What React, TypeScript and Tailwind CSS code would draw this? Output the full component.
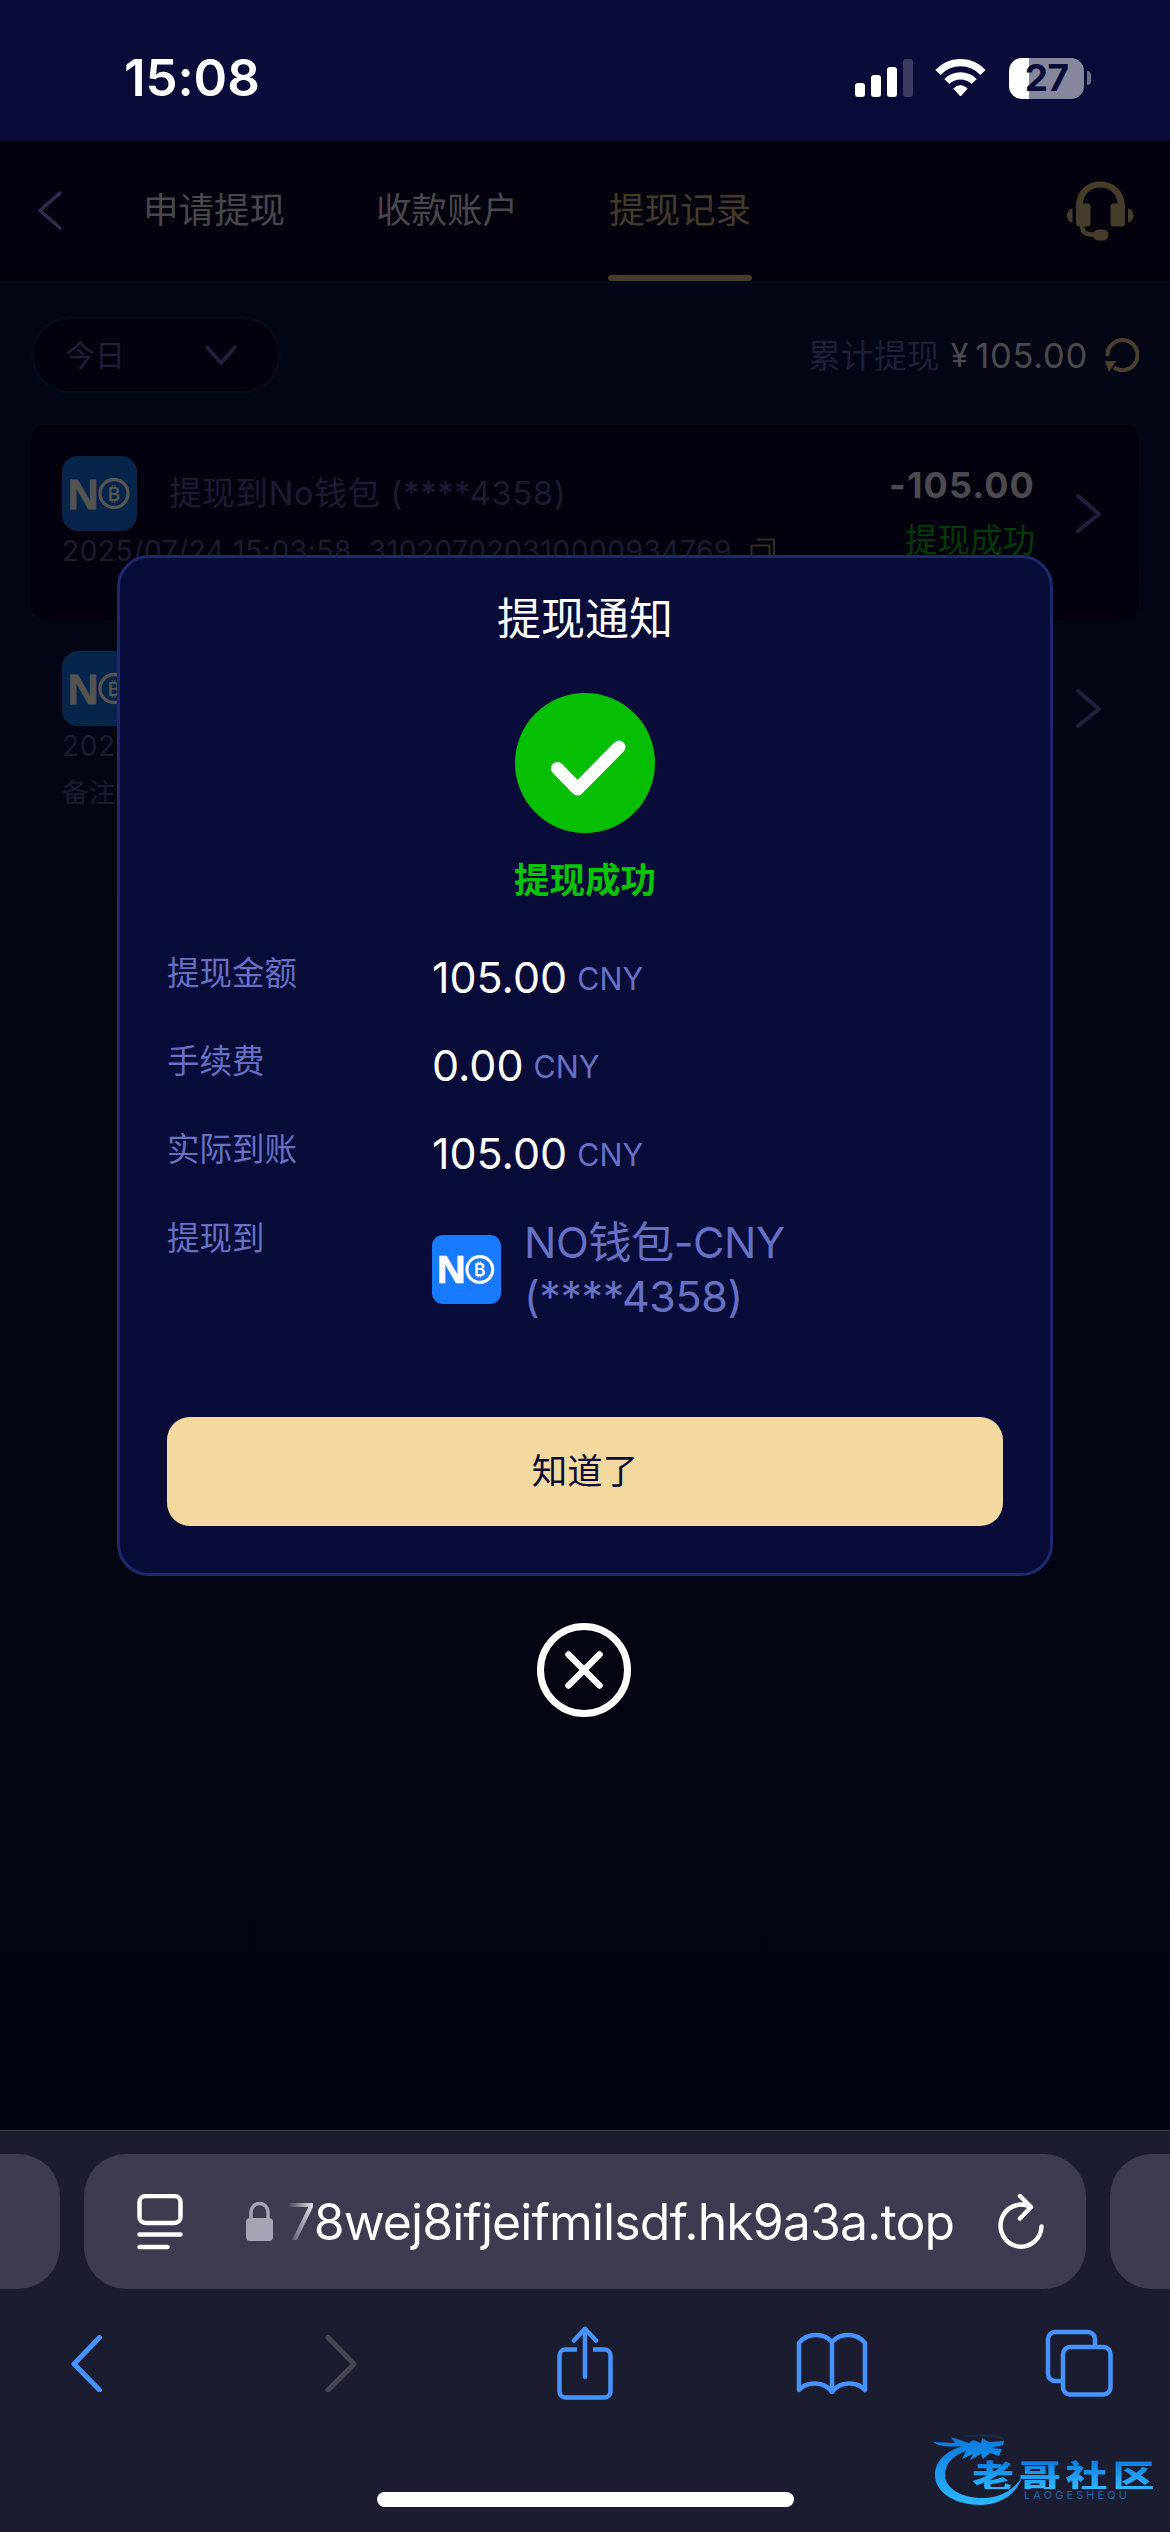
import type { ReactNode } from "react";

const tabs = ["申请提现", "收款账户", "提现记录"];

const amounts = [
  { label: "提现金额", value: "105.00" },
  { label: "手续费", value: "0.00" },
  { label: "实际到账", value: "105.00" }
];

export default function App() {
  return (
    <div className="flex h-[2532px] w-[1170px] flex-col overflow-hidden bg-[#020412] font-['Inter','Noto_Sans_CJK_SC',sans-serif]">
      <StatusBar />
      <main className="relative flex h-[1989px] flex-col bg-[linear-gradient(180deg,#030614_0%,#030513_50%,#020411_100%)]">
        <Header />
        <FilterBar />
        <section className="mt-[31px] px-[31px]">
          <RecordRow highlighted>
            <div className="flex w-[140px] shrink-0 flex-col items-end pt-[42px]">
              <p className="whitespace-nowrap text-[36px] font-bold leading-[36px] tracking-[1.1px] text-[#4b4b4d]">-105.00</p>
              <p className="mt-[20px] whitespace-nowrap text-[32.500px] leading-[36px] text-[#013b05]">提现成功</p>
            </div>
          </RecordRow>
          <RecordRow remark="备注" />
        </section>
        <WithdrawDialog />
      </main>
      <BrowserBar />
    </div>
  );
}

function StatusBar() {
  return (
    <div className="flex h-[141px] shrink-0 items-start justify-between bg-[#090b38] pl-[124px] pr-[79px] pt-[52px] text-white">
      <span className="text-[51px] font-semibold leading-[52px] tracking-[-0.1px]">15:08</span>
      <div className="flex h-[52px] items-center">
        <svg className="h-[38px] w-[59px]" viewBox="0 0 59 38">
          <rect x="0" y="24" width="10" height="14" rx="3" fill="#fff" />
          <rect x="16" y="16" width="10" height="22" rx="3" fill="#fff" />
          <rect x="32" y="8" width="10" height="30" rx="3" fill="#fff" />
          <rect x="48" y="0" width="10" height="38" rx="3" fill="#3b3c60" />
        </svg>
        <svg className="ml-[21px] h-[38px] w-[52px]" viewBox="0 0 52 38" fill="none" stroke="#fff" strokeWidth="7.2">
          <path d="M3 13.500A30.500 30.500 0 0 1 48 13.500" />
          <path d="M11.800 22.500A19.500 19.500 0 0 1 39.200 22.500" />
          <path d="M18.300 29.500Q25.500 22.500 32.700 29.500L26.500 36.500q-1 1-2 0z" fill="#fff" stroke="none" />
        </svg>
        <div className="ml-[22px] flex h-[41px] w-[75px] items-center justify-center rounded-[13px] bg-[linear-gradient(90deg,#fff_27%,#86869d_27%)]">
          <span className="text-[37px] font-bold leading-[40px] tracking-[-0.6px] text-[#090b38]">27</span>
        </div>
        <div className="ml-[3px] h-[14px] w-[4px] rounded-r-full bg-[#6c6d87]" />
      </div>
    </div>
  );
}

function Header() {
  return (
    <nav className="flex h-[143px] shrink-0 items-start border-b-[3px] border-[#050a1a] bg-[#03010e] pl-[37px] pr-[35px]">
      <svg className="mt-[50px] h-[39px] w-[26px]" viewBox="0 0 26 39" fill="none" stroke="#2a2d4b" strokeWidth="3.500" strokeLinecap="round" strokeLinejoin="round">
        <path d="M23 2L3 19.500L23 37" />
      </svg>
      <div className="ml-[79px] flex gap-[89px]">
        {tabs.map((tab) => (
          <div key={tab} className="flex h-[140px] w-[144px] flex-col items-center justify-between">
            <span
              className={
                tab === "提现记录"
                  ? "mt-[52px] whitespace-nowrap text-[35.500px] leading-[36px] text-[#443a29]"
                  : "mt-[52px] whitespace-nowrap text-[35.500px] leading-[36px] text-[#48484a]"
              }
            >
              {tab}
            </span>
            {tab === "提现记录" && <div className="h-[6px] w-full rounded-[3px] bg-[#453c2a]" />}
          </div>
        ))}
      </div>
      <svg className="ml-auto mt-[40px] h-[60px] w-[68px]" viewBox="0 0 68 60" fill="#453c2a">
        <path d="M9 26C9 10 20 .5 33.400 .5S58 10 58 26h-7C51 13 43 6.500 33.400 6.500S15.500 13 15.500 26z" />
        <rect x="9" y="22.500" width="14.500" height="23" rx="3" />
        <rect x="43.500" y="22.500" width="14.500" height="23" rx="3" />
        <path d="M5.500 27.500v14C2 41 0 38 0 34.500s2-6.500 5.500-7zM61 27.500v14c3.500-.5 5.500-3.500 5.500-7s-2-6.500-5.500-7z" />
        <path d="M15 44c0 6 3 9.500 9 9.500h6" fill="none" stroke="#453c2a" strokeWidth="4.500" />
        <rect x="26" y="48.500" width="15.500" height="11" rx="5.500" />
      </svg>
    </nav>
  );
}

function FilterBar() {
  return (
    <div className="mt-[32px] flex h-[78px] shrink-0 items-center justify-between px-[31px]">
      <div className="flex h-[78px] w-[250px] items-center justify-between rounded-full border-[3px] border-[#050a1a] bg-[#03010e] pl-[31px] pr-[40px]">
        <span className="text-[30px] leading-[30px] text-[#1e1e38]">今日</span>
        <svg className="h-[22px] w-[34px]" viewBox="0 0 34 22" fill="none" stroke="#20203a" strokeWidth="3.500" strokeLinecap="round" strokeLinejoin="round">
          <path d="M3 3L17 19L31 3" />
        </svg>
      </div>
      <div className="flex items-center text-[#4a4a4c]">
        <span className="mt-[2px] text-[33px] leading-[36px] text-[#1e1e38]">累计提现</span>
        <span className="ml-[11px] mt-[2px] text-[32px] leading-[36px]">¥</span>
        <span className="ml-[7px] mt-[2px] text-[34.500px] leading-[36px] tracking-[0.7px]">105.00</span>
        <svg className="ml-[17px] h-[34px] w-[34px]" viewBox="0 0 34 34" fill="none" stroke="#4a402b" strokeWidth="4">
          <path d="M2.500 18A15 15 0 1 1 9 29.500" />
          <path d="M0 23h11l-7 11z" fill="#4a402b" stroke="none" />
        </svg>
      </div>
    </div>
  );
}

function RecordRow({ highlighted, remark, children }: { highlighted?: boolean; remark?: string; children?: ReactNode }) {
  return (
    <article className={highlighted ? "flex h-[195px] rounded-[15px] bg-[#03010d] px-[31px]" : "flex h-[195px] px-[31px]"}>
      <div className="min-w-0 flex-1 pt-[31px]">
        <div className="flex items-center">
          <div className="flex h-[75px] w-[75px] items-center justify-center rounded-[16px] bg-[#07244b] text-[#555450]">
            <CoinLogo className="h-[75px] w-[75px]" />
          </div>
          <span className="ml-[32px] text-[32.500px] leading-[36px] tracking-[0.750px] text-[#1b1b34]">提现到No钱包 (****4358)</span>
        </div>
        <div className="mt-[5px] flex h-[30px] items-center text-[#1b1b32]">
          <span className="whitespace-pre text-[28px] leading-[30px] tracking-[0.600px]">2025/07/24 15:03:58  310207020310000934769</span>
          <svg className="ml-[18px] h-[26px] w-[25px]" viewBox="0 0 25 26" fill="none" stroke="#352d20" strokeWidth="2">
            <path d="M7 1.500h17v19M1.500 7.500h18v17h-18z" />
          </svg>
        </div>
        {remark && <p className="mt-[16px] text-[26.500px] leading-[30px] text-[#1b1b32]">{remark}</p>}
      </div>
      {children}
      <svg className="ml-[39px] mr-[5px] mt-[68px] h-[41px] w-[29px] shrink-0" viewBox="0 0 29 41" fill="none" stroke="#20203a" strokeWidth="4" strokeLinecap="round" strokeLinejoin="round">
        <path d="M4 3L25 21L4 38" />
      </svg>
    </article>
  );
}

function CoinLogo({ className }: { className: string }) {
  return (
    <svg className={className} viewBox="0 0 75 75" fill="currentColor">
      <text x="5.500" y="52.500" stroke="currentColor" strokeWidth="0.800" className="font-['Liberation_Sans',sans-serif] text-[43px] font-bold">
        N
      </text>
      <circle cx="52" cy="37.500" r="14" fill="none" stroke="currentColor" strokeWidth="3.300" />
      <text x="52" y="44.500" textAnchor="middle" className="text-[19px] font-semibold">₿</text>
    </svg>
  );
}

function WithdrawDialog() {
  return (
    <div className="absolute inset-0 flex flex-col items-center pt-[414px]">
      <div className="flex h-[1021px] w-[936px] flex-col items-center rounded-[32px] border-[3px] border-[#1d286d] bg-[#090b38] px-[47px]">
        <h1 className="mt-[37px] text-[44px] leading-[48px] text-white">提现通知</h1>
        <svg className="mt-[50px] h-[140px] w-[140px]" viewBox="0 0 140 140">
          <circle cx="70" cy="70" r="70" fill="#07bf02" />
          <path d="M42.500 75.500L62.500 96L104 54" fill="none" stroke="#fff" strokeWidth="13" strokeLinecap="round" strokeLinejoin="round" />
        </svg>
        <p className="mt-[30px] text-[35.500px] font-bold leading-[36px] text-[#08c404]">提现成功</p>
        <dl className="mt-[53px] flex w-full flex-col text-[#6671c3]">
          {amounts.map((row) => (
            <div key={row.label} className="flex h-[88px] items-start">
              <dt className="mt-[4px] w-[265px] text-[32.500px] leading-[36px]">{row.label}</dt>
              <dd className="flex items-center">
                <span className="text-[43px] leading-[50px] text-white">{row.value}</span>
                <span className="ml-[10px] pt-[3px] text-[30.500px] leading-[47px]">CNY</span>
              </dd>
            </div>
          ))}
          <div className="flex items-start">
            <dt className="mt-[5px] w-[265px] text-[32.500px] leading-[36px]">提现到</dt>
            <dd className="-mt-px flex items-center">
              <div className="flex h-[69px] w-[69px] items-center justify-center rounded-[11px] bg-[#187aff] text-white">
                <CoinLogo className="h-[69px] w-[69px]" />
              </div>
              <p className="ml-[23px] text-[43px] leading-[54px] tracking-[-0.4px]">
                NO钱包-CNY
                <br />
                (****4358)
              </p>
            </dd>
          </div>
        </dl>
        <button type="button" className="mb-[47px] mt-auto h-[109px] w-full shrink-0 rounded-[23px] bg-[#f3d99f] text-[35.500px] text-[#090b38]">
          知道了
        </button>
      </div>
      <svg className="mt-[46px] h-[96px] w-[96px]" viewBox="0 0 96 96" fill="none" stroke="#fff" strokeLinecap="round">
        <circle cx="47" cy="48" r="43.500" strokeWidth="7" />
        <path d="M31.500 32.500L62.500 63.500M62.500 32.500L31.500 63.500" strokeWidth="6.500" />
      </svg>
    </div>
  );
}

function BrowserBar() {
  return (
    <footer className="relative flex h-[402px] shrink-0 flex-col border-t border-[#3f3f48] bg-[#1c1c30]">
      <div className="mt-[23px] flex h-[135px] shrink-0 justify-between">
        <div className="w-[60px] rounded-r-[42px] bg-[#3c3b50]" />
        <div className="flex w-[1002px] items-center rounded-[42px] bg-[#3c3b50] pl-[53px] text-white">
          <svg className="h-[56px] w-[46px]" viewBox="0 0 46 56" fill="none" stroke="#fff" strokeWidth="4.500" strokeLinecap="round">
            <rect x="2.500" y="2" width="41" height="27" rx="6" />
            <path d="M2.500 40.500h41M2.500 53h28" />
          </svg>
          <svg className="ml-[63px] h-[40px] w-[27px]" viewBox="0 0 27 40">
            <rect y="16" width="27" height="23" rx="4" fill="#a4a4b5" />
            <path d="M5 18v-8a8.500 8.500 0 0 1 17 0v8" fill="none" stroke="#a4a4b5" strokeWidth="3.500" />
          </svg>
          <span className="ml-[14px] whitespace-nowrap bg-[linear-gradient(90deg,#3c3b50_0px,#fff_30px)] bg-clip-text text-[50px] leading-[60px] tracking-[-0.930px] text-transparent">
            78wej8ifjeifmilsdf.hk9a3a.top
          </span>
          <svg className="ml-auto mr-[42px] h-[56px] w-[46px] shrink-0" viewBox="0 0 46 56" fill="none" stroke="#fff" strokeWidth="4.500" strokeLinecap="round" strokeLinejoin="round">
            <path d="M43.500 32.500A20.500 21 0 1 1 32 12.800M22 2L33 13L22 24.500" />
          </svg>
        </div>
        <div className="w-[60px] rounded-l-[42px] bg-[#3c3b50]" />
      </div>
      <div className="mt-[36px] flex h-[76px] items-center pl-[70px]">
        <svg className="h-[58px] w-[34px]" viewBox="0 0 34 58" fill="none" stroke="#4693ff" strokeWidth="5" strokeLinecap="round" strokeLinejoin="round">
          <path d="M29.500 3.500L4 30L29.500 56" />
        </svg>
        <svg className="ml-[220px] h-[58px] w-[34px]" viewBox="0 0 34 58" fill="none" stroke="#474753" strokeWidth="5" strokeLinecap="round" strokeLinejoin="round">
          <path d="M4 3.500L30 30L4 56" />
        </svg>
        <svg className="ml-[198px] h-[74px] w-[58px]" viewBox="0 0 58 74" fill="none" stroke="#4693ff" strokeWidth="4.500" strokeLinecap="round" strokeLinejoin="round">
          <path d="M29 2.800v48M18 14.500L29 2.800L40 14.500" />
          <path d="M21 23.500H9.500a6 6 0 0 0-6 6v36a6 6 0 0 0 6 6h39a6 6 0 0 0 6-6v-36a6 6 0 0 0-6-6H37" strokeLinecap="butt" />
        </svg>
        <svg className="ml-[182px] h-[62px] w-[72px]" viewBox="0 0 72 62" fill="none" stroke="#4693ff" strokeWidth="4.500" strokeLinecap="round" strokeLinejoin="round">
          <path d="M36 10v50M36 10C28 .5 11 .5 3 11v47C11 49 28 49 36 60C44 49 61 49 69 58V11C61 .5 44 .5 36 10z" />
        </svg>
        <svg className="ml-[177px] h-[68px] w-[68px]" viewBox="0 0 68 68" fill="none" stroke="#4693ff" strokeWidth="4.500">
          <rect x="18" y="18" width="47.500" height="47.500" rx="7" />
          <path d="M50 17V10a7 7 0 0 0-7-7H10a7 7 0 0 0-7 7v35a7 7 0 0 0 7 7h7" />
        </svg>
      </div>
      <div className="ml-[377px] mt-[91px] h-[15px] w-[417px] rounded-full bg-white" />
      <Watermark />
    </footer>
  );
}

function Watermark() {
  return (
    <div className="absolute bottom-[20px] right-[14px] h-[80px] w-[226px]">
      <svg className="absolute inset-0 h-[80px] w-[226px]" viewBox="0 0 226 80">
        <defs>
          <linearGradient id="dragon" x1="0" y1="0" x2="0" y2="1">
            <stop offset="0" stopColor="#0b78dc" />
            <stop offset="1" stopColor="#2cb6ff" />
          </linearGradient>
        </defs>
        <g transform="translate(-7 0)">
          <path
            d="M40 14C23 19 12 29 12 43C12 61 33 73 58 73C78 72 94 62 99 45C91 58 76 66 60 66C38 66 22 56 22 43C22 31 31 23 43 19L39 27L50 22L47 28L58 22L60 27L67 21L76 24L79 17L68 16L80 13L81 9L66 10L59 6L58 11L50 8L46 11L28 5L32 11L10 10C16 15 28 15 40 14z"
            fill="url(#dragon)"
          />
          <path d="M36 1C46 7 54 0 66 3C76 2 82 5 81 9C77 4 70 5 63 5C53 2 46 9 36 1z" fill="#17406f" opacity="0.4" />
        </g>
      </svg>
      <div className="absolute left-[42px] top-[22px] origin-center scale-y-[0.76] whitespace-nowrap bg-gradient-to-b from-[#0878df] to-[#30b8ff] bg-clip-text font-['Noto_Sans_CJK_SC',sans-serif] text-[42px] font-black leading-[40px] tracking-[4.8px] text-transparent">
        老哥社区
      </div>
      <div className="absolute left-[94px] top-[57px] text-[11px] leading-[12px] tracking-[3.1px] text-[#1769b0]">LAOGESHEQU</div>
    </div>
  );
}
